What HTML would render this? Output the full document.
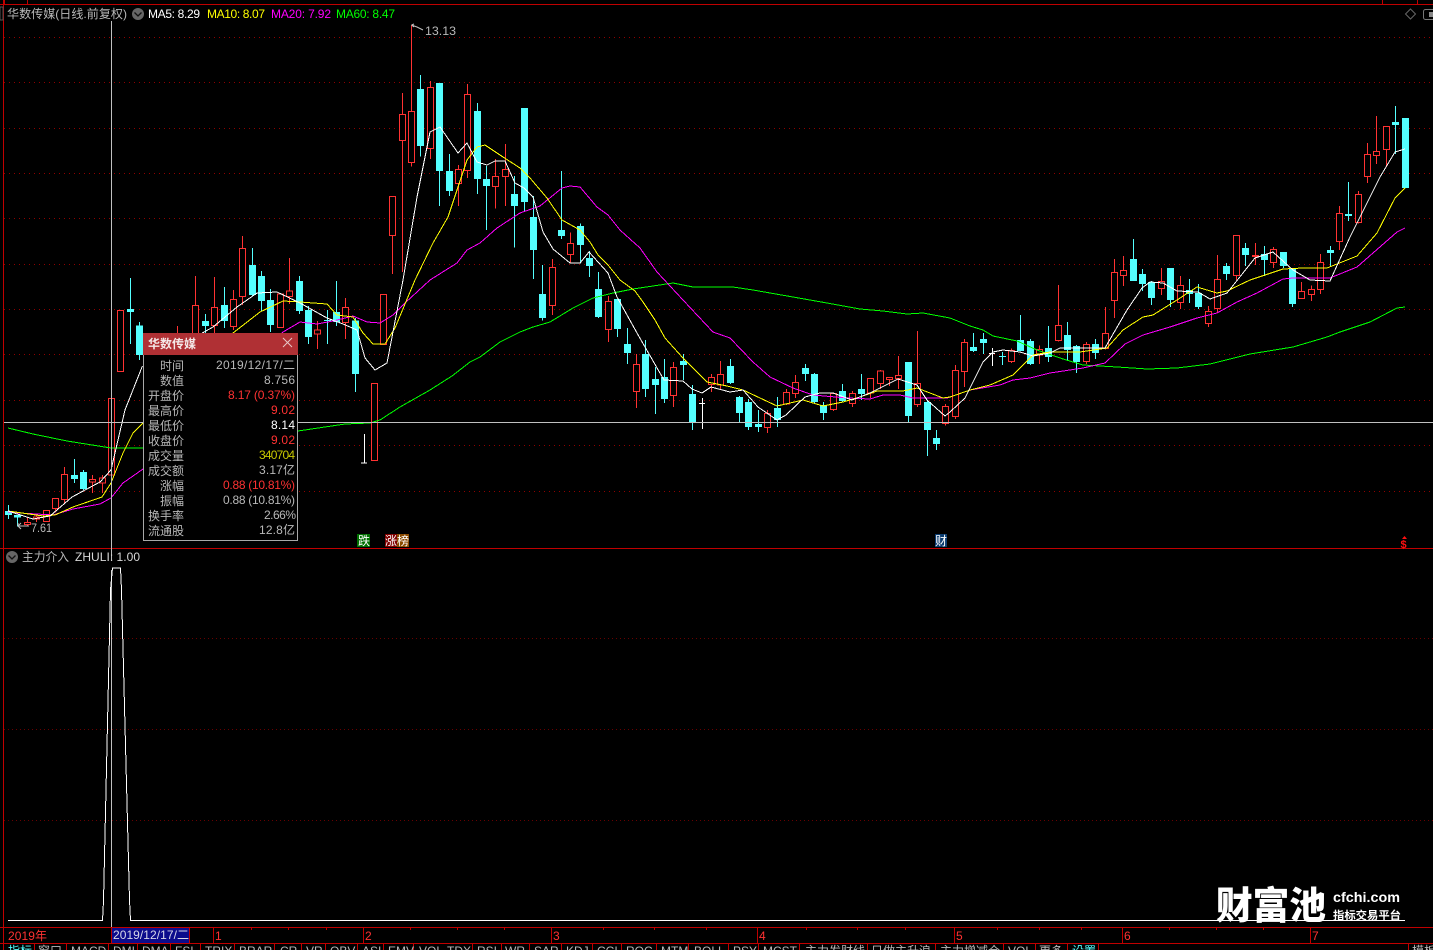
<!DOCTYPE html>
<html lang="zh-CN">
<head>
<meta charset="utf-8">
<title>华数传媒</title>
<style>
html,body{margin:0;padding:0;background:#000;width:1433px;height:950px;overflow:hidden}
svg{display:block}
text{font-family:"Liberation Sans","Noto Sans CJK SC",sans-serif;font-size:12px;fill:#b8b8b8}
.r{fill:#ff3232}.w{fill:#fff}.y{fill:#ffff00}.m{fill:#ff00ff}.g{fill:#00ff00}.c{fill:#54ffff}
.e{text-anchor:end}
.cw{stroke:#54ffff;stroke-width:3;fill:none}
.cb{stroke:#54ffff;stroke-width:21;fill:none}
.rw{stroke:#ff3232;stroke-width:3;fill:none}
.rb{stroke:#ff3232;stroke-width:3;fill:#000}
.ww{stroke:#fff;stroke-width:3;fill:none}
.l{fill:none;stroke-width:1;shape-rendering:crispEdges}
.gd{stroke:#900000;stroke-width:1;stroke-dasharray:1 4;fill:none}
.gl{stroke:#680000;stroke-width:1;stroke-dasharray:1 3;fill:none}
.fr{stroke:#c00000;stroke-width:1;fill:none;shape-rendering:crispEdges}
</style>
</head>
<body>
<svg width="1433" height="950" viewBox="0 0 1433 950" xmlns="http://www.w3.org/2000/svg">
<rect width="1433" height="950" fill="#000"/>

<!-- grid -->
<path class="gd" shape-rendering="crispEdges" d="M4 37.5H1433M4 82.5H1433M4 128.5H1433M4 173.5H1433M4 218.5H1433M4 264.5H1433M4 309.5H1433M4 354.5H1433M4 400.5H1433M4 445.5H1433M4 491.5H1433"/>
<path class="gl" shape-rendering="crispEdges" d="M4 638.5H1433M4 729.5H1433M4 820.5H1433"/>

<!-- frame -->
<path class="fr" d="M0 4.5H1433M3.5 0V950M0 548.5H1433M0 927.5H1433M0 943.5H1433M4.5 0V4M27.5 0V4M1382.5 0V4M1417.5 0V4"/>
<path class="fr" d="M111.5 927V943M189.5 927V943M213.5 927V943M363.5 927V943M551.5 927V943M757.5 927V943M954.5 927V943M1122.5 927V943M1310.5 927V943M251.5 927V930M288.5 927V930M326.5 927V930M410.5 927V930M457.5 927V930M504.5 927V930M603.5 927V930M654.5 927V930M706.5 927V930M806.5 927V930M857.5 927V930M905.5 927V930M997.5 927V930M1039.5 927V930M1081.5 927V930M1169.5 927V930M1216.5 927V930M1263.5 927V930"/>
<path class="fr" d="M34.5 943V950M66.5 943V950M108.5 943V950M137.5 943V950M170.5 943V950M200.5 943V950M234.5 943V950M274.5 943V950M301.5 943V950M325.5 943V950M357.5 943V950M383.5 943V950M413.5 943V950M472.5 943V950M501.5 943V950M529.5 943V950M561.5 943V950M592.5 943V950M621.5 943V950M656.5 943V950M688.5 943V950M728.5 943V950M758.5 943V950M799.5 943V950M867.5 943V950M935.5 943V950M1003.5 943V950M1035.5 943V950M1067.5 943V950M1098.5 943V950M1408.5 943V950"/>

<!-- candles x<480 -->
<g transform="translate(0 280) scale(.33333)" shape-rendering="crispEdges">
<path class="rw" d="M82 712V737M109 705V726M139 691V726M166 655V697M193 561V672M277 585V639M307 585V639M532 138V200M586 -12V200M643 -9V160M700 30V150M727 -132V75M841 42V143M868 -66V72M952 123V207M1036 54V177M1177 -134V-18M1207 -561V-24M1234 -765V-340M1291 -597V-363M1375 -345V-222M1402 -588V-306"/>
<path class="cw" d="M25 675V717M52 705V740M223 537V609M250 570V630M391 -6V192M418 126V240M616 102V160M673 21V144M757 -96V50M784 -27V93M811 27V156M898 -12V102M925 78V192M982 90V192M1009 3V138M1066 114V336M1261 -615V-370M1318 -327V-222M1348 -378V-252M1432 -531V-258"/>
<path class="cb" d="M25 693V705M52 705V712M223 585V597M250 576V627M391 87V96M418 136V225M616 123V138M673 75V123M757 -45V45M784 -12V63M811 60V135M898 3V93M925 90V171M982 120V123M1009 96V126M1066 122V282M1261 -573V-402M1318 -591V-327M1348 -327V-267M1432 -507V-303"/>
<path class="rb" d="M73 727H91V734H73zM100 711H118V717H100zM130 691H148V724H130zM157 655H175V685H157zM184 583H202V658H184zM268 598H286V606H268zM298 594H316V609H298zM325 355H343V585H325zM352 91H370V274H352zM577 76H595V200H577zM634 82H652V137H634zM691 58H709V139H691zM718 -95H736V50H718zM832 42H850V143H832zM859 33H877V50H859zM943 150H961V162H943zM1027 82H1045V127H1027zM1114 310H1132V542H1114zM1141 43H1159V194H1141zM1168 -251H1186V-134H1168zM1198 -497H1216V-419H1198zM1225 -506H1243V-352H1225zM1282 -578H1300V-394H1282zM1366 -332H1384V-289H1366zM1393 -557H1411V-328H1393z"/>
<path class="ww" d="M1093 462V549M1083 549H1101"/>
</g>

<!-- candles 480-960 -->
<g transform="translate(480 90) scale(.33333)" shape-rendering="crispEdges">
<path class="rw" d="M46 207V356M76 162V348M217 507V675M271 427V520M385 618V756M469 792V954M580 816V951M694 852V906M721 813V900M862 960V1029M919 897V945M946 855V924M1060 908V963M1117 903V951M1171 865V924M1201 840V897M1228 862V888M1255 798V897M1312 723V951M1396 942V1006M1426 825V987"/>
<path class="cw" d="M19 228V420M103 258V473M133 336V364M160 318V567M187 525V692M244 243V447M301 400V520M328 483V561M355 546V684M412 627V741M442 714V822M496 750V921M526 831V972M553 807V939M610 792V870M637 885V1020M751 807V882M778 918V999M805 927V1020M835 960V1026M892 921V1011M976 822V873M1003 849V940M1030 936V990M1087 882V936M1144 852V930M1285 816V999M1342 930V1098M1369 1020V1080"/>
<path class="cb" d="M19 267V288M103 312V348M133 54V336M160 381V480M187 612V684M244 420V438M301 408V465M328 504V528M355 597V681M412 627V717M442 762V789M496 792V897M526 867V885M553 861V927M610 813V825M637 912V996M751 828V879M778 921V969M805 936V1011M835 1002V1011M892 954V990M976 834V852M1003 852V936M1030 945V969M1087 903V933M1144 897V912M1285 816V978M1342 936V1020M1369 1044V1062"/>
<path class="rb" d="M37 259H55V290H37zM67 238H85V260H67zM208 532H226V646H208zM262 460H280V493H262zM376 634H394V718H376zM460 823H478V905H460zM571 832H589V917H571zM685 862H703V884H685zM712 853H730V885H712zM853 970H871V1013H853zM910 907H928V942H910zM937 877H955V911H937zM1051 910H1069V959H1051zM1108 910H1126V941H1108zM1162 865H1180V909H1162zM1192 843H1210V881H1192zM1219 862H1237V869H1219zM1246 856H1264V866H1246zM1303 880H1321V944H1303zM1387 949H1405V1000H1387zM1417 841H1435V980H1417z"/>
<path class="ww" d="M667 924V1017M657 940H675"/>
</g>

<!-- candles 960+ -->
<g transform="translate(950 90) scale(.33333)" shape-rendering="crispEdges">
<path class="rw" d="M43 747V891M184 775V819M268 766V822M325 585V754M409 756V822M466 651V778M493 507V684M520 498V588M634 534V615M691 558V657M775 648V711M802 495V669M859 436V570M916 459V525M970 471V534M1054 576V626M1084 586V633M1111 492V612M1168 348V480M1225 303V400M1252 159V279M1279 78V222M1309 109V231"/>
<path class="cw" d="M70 729V786M100 729V792M157 786V825M211 675V783M241 747V825M295 708V816M352 696V810M379 765V849M436 747V807M550 447V573M577 537V603M604 573V645M661 534V651M718 567V639M745 582V657M829 519V570M886 459V528M943 468V558M1000 486V534M1027 537V651M1141 468V528M1195 276V393M1336 48V192"/>
<path class="cb" d="M70 771V783M100 747V759M157 798V801M211 750V783M241 753V822M295 774V801M352 735V780M379 768V816M436 762V789M550 507V573M577 552V582M604 576V624M661 534V630M718 600V612M745 609V651M829 528V552M886 474V495M943 492V510M1000 486V528M1027 537V642M1141 480V489M1195 372V378M1336 96V105M1366 84V294"/>
<path class="rb" d="M34 757H52V845H34zM175 782H193V815H175zM259 778H277V795H259zM316 706H334V752H316zM400 763H418V815H400zM457 730H475V776H457zM484 547H502V631H484zM511 541H529V556H511zM625 574H643V596H625zM682 586H700V638H682zM766 665H784V700H766zM793 568H811V656H793zM850 436H868V557H850zM907 497H925V499H907zM961 478H979V518H961zM1045 604H1063V626H1045zM1075 598H1093V613H1075zM1102 517H1120V599H1102zM1159 370H1177V454H1159zM1216 313H1234V398H1216zM1243 193H1261V260H1243zM1270 184H1288V196H1270zM1300 109H1318V179H1300z"/>
<path class="ww" d="M127 774V828M117 790H135"/>
</g>

<!-- MA60 -->
<polyline class="l" stroke="#00ff00" points="8,428 33,434 67,441 111,448 143,448 298,431 345,424 370,423 380,420 400,407 430,390 452,376 470,362 480,357 500,342 520,332 533,327 550,322 573,308 593,298 613,293 633,289 653,286 673,283 693,287 733,287 753,290 793,297 827,303 860,309 883,311 907,314 923,313 950,318 970,326 983,330 993,336 1017,341 1037,350 1063,359 1083,365 1117,367 1147,369 1177,368 1210,364 1250,354 1293,347 1327,337 1340,332 1370,322 1397,308 1405,307"/>
<!-- MA20 -->
<polyline class="l" stroke="#ff00ff" points="8,512 20,513 53,515 73,509 100,504 111,498 123,483 143,469 283,332 300,322 317,324 333,321 353,316 367,322 380,323 393,315 405,303 430,280 457,263 467,250 480,243 497,228 520,213 540,206 562,188 570,186 580,187 597,207 608,215 620,230 640,248 657,272 683,300 713,332 730,338 753,362 770,377 793,388 813,395 847,398 870,399 883,395 900,395 913,398 947,398 950,397 970,390 1000,385 1013,380 1030,378 1050,373 1083,368 1105,363 1125,344 1143,335 1170,327 1197,318 1217,313 1237,302 1257,293 1283,279 1293,278 1330,278 1357,267 1373,253 1397,232 1405,228"/>
<!-- MA10 -->
<polyline class="l" stroke="#ffff00" points="8,511 43,516 55,515 73,507 102,497 111,483 123,453 133,433 143,423 233,333 260,312 283,301 300,302 327,304 337,315 353,317 363,333 373,344 385,344 395,328 415,280 433,243 448,217 467,160 477,147 485,145 503,157 520,168 530,178 547,198 562,220 580,230 590,242 598,255 608,265 620,280 635,291 643,302 655,320 665,338 683,358 707,382 727,386 743,390 777,406 803,400 823,406 843,402 860,397 877,391 903,391 917,388 943,398 950,397 970,390 990,385 1013,375 1033,355 1050,352 1080,352 1107,348 1123,330 1143,317 1153,315 1177,300 1197,287 1217,293 1227,291 1250,280 1283,269 1303,268 1327,268 1357,256 1377,233 1395,198 1405,188"/>
<!-- MA5 -->
<polyline class="l" stroke="#ffffff" points="8,511 33,519 50,516 72,497 100,482 111,470 125,410 142,367 213,327 237,307 257,293 277,292 300,303 327,318 343,324 357,330 365,358 375,370 387,363 403,280 417,197 430,132 440,127 458,153 467,143 477,162 487,165 495,161 505,161 515,183 524,188 533,197 543,232 553,249 570,263 580,263 589,252 608,273 617,297 637,333 645,347 664,380 683,381 692,389 702,393 711,387 730,392 743,390 758,407 777,420 786,415 805,397 820,393 833,393 852,400 870,393 898,379 917,385 927,400 945,416 950,412 965,398 983,362 993,352 1003,350 1020,352 1033,356 1050,353 1060,348 1105,348 1127,310 1142,288 1150,282 1163,283 1177,291 1198,292 1210,299 1227,293 1255,258 1273,252 1293,270 1310,280 1330,281 1350,237 1380,177 1395,152 1405,149"/>

<!-- crosshair -->
<path stroke="#c0c0c0" stroke-width="1" fill="none" shape-rendering="crispEdges" d="M111.5 21V560M111.5 570V927M4 422.5H1433"/>

<!-- sub chart line -->
<polyline points="8,920.5 102.5,920.5 103.5,901 110.5,590 112.5,568 120.5,568 121.5,590 129.5,900 130.5,920.5 1405,920.5" fill="none" stroke="#fff" stroke-width="1" shape-rendering="crispEdges"/>

<!-- extremes -->
<path d="M411.5 25L417 27L423 30M411.5 25L414 24M411.5 25L414 27" stroke="#c0c0c0" fill="none"/>
<text x="425" y="35" textLength="31" lengthAdjust="spacingAndGlyphs">13.13</text>
<path d="M18 526H29M18 526L21 523M18 526L21 529M18 526V523" stroke="#c0c0c0" fill="none"/>
<text x="31" y="532" textLength="21" lengthAdjust="spacingAndGlyphs">7.61</text>

<!-- title bar -->
<rect x="0" y="7" width="3" height="13" fill="none" stroke="#555"/>
<text x="7" y="18" textLength="120" lengthAdjust="spacingAndGlyphs">华数传媒(日线.前复权)</text>
<circle cx="138" cy="14" r="6" fill="#666"/>
<path d="M134.5 12.5L138 16L141.5 12.5" stroke="#111" stroke-width="1.3" fill="none"/>
<text x="148" y="18" class="w" textLength="52" lengthAdjust="spacing">MA5: 8.29</text>
<text x="207" y="18" class="y" textLength="58" lengthAdjust="spacing">MA10: 8.07</text>
<text x="271" y="18" class="m" textLength="60" lengthAdjust="spacing">MA20: 7.92</text>
<text x="336" y="18" class="g" textLength="59" lengthAdjust="spacing">MA60: 8.47</text>
<path d="M1410.5 9L1415.5 14L1410.5 19L1405.5 14Z" fill="none" stroke="#666"/>
<rect x="1423.5" y="9.5" width="14" height="10" rx="2" fill="none" stroke="#777"/>
<rect x="1429" y="12" width="4" height="5" fill="#888"/>

<!-- sub chart title -->
<circle cx="12" cy="557" r="6" fill="#666"/>
<path d="M8.5 555.5L12 559L15.5 555.5" stroke="#111" stroke-width="1.3" fill="none"/>
<text x="22" y="561" textLength="47" lengthAdjust="spacingAndGlyphs">主力介入</text>
<text x="75" y="561" style="fill:#d8d8d8" textLength="65" lengthAdjust="spacing">ZHULI: 1.00</text>

<!-- badges -->
<rect x="357" y="534" width="13" height="13" fill="#007000"/>
<text x="358" y="545" style="fill:#fff;font-size:12px">跌</text>
<rect x="385" y="534" width="12" height="13" fill="#800000"/>
<rect x="397" y="534" width="12" height="13" fill="#8a4a00"/>
<text x="385" y="545" style="fill:#fff;font-size:12px">涨榜</text>
<rect x="935" y="534" width="12" height="13" fill="#0a3c70"/>
<text x="935" y="545" style="fill:#fff;font-size:12px">财</text>
<path d="M1404.5 536L1407 539H1402Z" fill="#ff1010"/>
<text x="1400.5" y="548" style="fill:#ff1010;font-size:11px;font-weight:bold">$</text>

<!-- popup -->
<rect x="143.5" y="333.5" width="154" height="207" fill="#000" stroke="#a8a8a8"/>
<rect x="143" y="333" width="155" height="22" fill="#b03034"/>
<text x="148" y="348" style="fill:#f4e8e8;font-size:12px;font-weight:bold">华数传媒</text>
<path d="M283 338L292 347M292 338L283 347" stroke="#e8c8c8" fill="none"/>
<g>
<text x="184" y="370" class="e">时间</text>
<text x="184" y="385" class="e">数值</text>
<text x="184" y="400" class="e">开盘价</text>
<text x="184" y="415" class="e">最高价</text>
<text x="184" y="430" class="e">最低价</text>
<text x="184" y="445" class="e">收盘价</text>
<text x="184" y="460" class="e">成交量</text>
<text x="184" y="475" class="e">成交额</text>
<text x="184" y="490" class="e">涨幅</text>
<text x="184" y="505" class="e">振幅</text>
<text x="184" y="520" class="e">换手率</text>
<text x="184" y="535" class="e">流通股</text>
<text x="216" y="369" textLength="79" lengthAdjust="spacing">2019/12/17/二</text>
<text x="264" y="384" textLength="31" lengthAdjust="spacing">8.756</text>
<text x="228" y="399" class="r" textLength="67" lengthAdjust="spacing">8.17 (0.37%)</text>
<text x="271" y="414" class="r" textLength="24" lengthAdjust="spacing">9.02</text>
<text x="271" y="429" class="w" textLength="24" lengthAdjust="spacing">8.14</text>
<text x="271" y="444" class="r" textLength="24" lengthAdjust="spacing">9.02</text>
<text x="259" y="459" style="fill:#c8c800" textLength="36" lengthAdjust="spacing">340704</text>
<text x="259" y="474" textLength="36" lengthAdjust="spacing">3.17亿</text>
<text x="223" y="489" class="r" textLength="72" lengthAdjust="spacing">0.88 (10.81%)</text>
<text x="223" y="504" textLength="72" lengthAdjust="spacing">0.88 (10.81%)</text>
<text x="264" y="519" textLength="32" lengthAdjust="spacing">2.66%</text>
<text x="259" y="534" textLength="36" lengthAdjust="spacing">12.8亿</text>
</g>

<!-- axis -->
<rect x="112" y="928" width="77" height="15" fill="#0c0c8c"/>
<text x="8" y="940" class="r" textLength="39" lengthAdjust="spacing">2019年</text>
<text x="113" y="939" style="fill:#d8d8e8" textLength="76" lengthAdjust="spacing">2019/12/17/二</text>
<text x="215" y="940" class="r">1</text>
<text x="365" y="940" class="r">2</text>
<text x="553" y="940" class="r">3</text>
<text x="759" y="940" class="r">4</text>
<text x="956" y="940" class="r">5</text>
<text x="1124" y="940" class="r">6</text>
<text x="1312" y="940" class="r">7</text>

<!-- logo -->
<text x="1216" y="919" style="fill:#fff;font-size:38px;font-weight:900" textLength="110" lengthAdjust="spacingAndGlyphs">财富池</text>
<text x="1333" y="902" style="fill:#fff;font-size:14px;font-weight:bold" textLength="67" lengthAdjust="spacingAndGlyphs">cfchi.com</text>
<text x="1333" y="919" style="fill:#fff;font-size:11px;font-weight:bold" textLength="68" lengthAdjust="spacingAndGlyphs">指标交易平台</text>

<!-- buttons (clipped) -->
<g>
<text x="8" y="955" class="c">指标</text>
<text x="38" y="955">窗口</text>
<text x="71" y="955">MACD</text>
<text x="113" y="955">DMI</text>
<text x="142" y="955">DMA</text>
<text x="175" y="955">FSL</text>
<text x="205" y="955">TRIX</text>
<text x="239" y="955">BRAR</text>
<text x="280" y="955">CR</text>
<text x="306" y="955">VR</text>
<text x="330" y="955">OBV</text>
<text x="362" y="955">ASI</text>
<text x="388" y="955">EMV</text>
<text x="419" y="955">VOL-TDX</text>
<text x="477" y="955">RSI</text>
<text x="505" y="955">WR</text>
<text x="534" y="955">SAR</text>
<text x="566" y="955">KDJ</text>
<text x="597" y="955">CCI</text>
<text x="626" y="955">ROC</text>
<text x="661" y="955">MTM</text>
<text x="694" y="955">BOLL</text>
<text x="733" y="955">PSY</text>
<text x="763" y="955">MCST</text>
<text x="805" y="955">主力发财线</text>
<text x="871" y="955">日做主升浪</text>
<text x="940" y="955">主力增减仓</text>
<text x="1008" y="955">VOL</text>
<text x="1039" y="955">更多</text>
<text x="1072" y="955" class="c">设置</text>
<text x="1412" y="955">模板</text>
</g>
</svg>
</body>
</html>
